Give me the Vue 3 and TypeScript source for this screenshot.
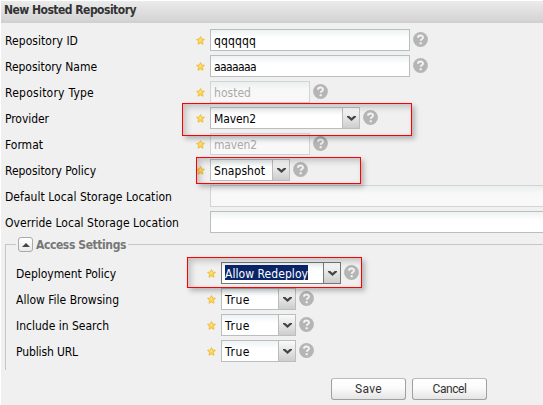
<script setup lang="ts">
interface Field {
  label: string
  labelWidth: number
  value: string
  kind: 'text' | 'combo'
  width: number
  valueWidth?: number
  required?: boolean
  disabled?: boolean
  focused?: boolean
}

const fields: Field[] = [
  { label: 'Repository ID', labelWidth: 73, value: 'qqqqqq', valueWidth: 42, kind: 'text', width: 200, required: true },
  { label: 'Repository Name', labelWidth: 92, value: 'aaaaaaa', valueWidth: 42, kind: 'text', width: 200, required: true },
  { label: 'Repository Type', labelWidth: 89, value: 'hosted', valueWidth: 37, kind: 'text', width: 100, required: true, disabled: true },
  { label: 'Provider', labelWidth: 44, value: 'Maven2', valueWidth: 42, kind: 'combo', width: 150, required: true },
  { label: 'Format', labelWidth: 38, value: 'maven2', valueWidth: 43, kind: 'text', width: 100, required: true, disabled: true },
  { label: 'Repository Policy', labelWidth: 91, value: 'Snapshot', valueWidth: 51, kind: 'combo', width: 80, required: true },
  { label: 'Default Local Storage Location', labelWidth: 167, value: '', kind: 'text', width: 340, disabled: true },
  { label: 'Override Local Storage Location', labelWidth: 174, value: '', kind: 'text', width: 340 },
]

const accessFields: Field[] = [
  { label: 'Deployment Policy', labelWidth: 100, value: 'Allow Redeploy', valueWidth: 83, kind: 'combo', width: 120, required: true, focused: true },
  { label: 'Allow File Browsing', labelWidth: 103, value: 'True', valueWidth: 25, kind: 'combo', width: 75, required: true },
  { label: 'Include in Search', labelWidth: 93, value: 'True', valueWidth: 25, kind: 'combo', width: 75, required: true },
  { label: 'Publish URL', labelWidth: 62, value: 'True', valueWidth: 25, kind: 'combo', width: 75, required: true },
]

const groups = [
  { name: 'main', items: fields },
  { name: 'access', items: accessFields },
]

const vFit = {
  mounted(el: HTMLElement, binding: { value: number | undefined }) {
    const count = el.textContent?.length ?? 0
    if (!binding.value || !count) return
    const natural = el.getBoundingClientRect().width
    el.style.letterSpacing = `${(binding.value - natural) / count}px`
  },
}
</script>

<template>
  <main class="panel">
    <header class="title"><span v-fit="132">New Hosted Repository</span></header>
    <section v-for="group in groups" :key="group.name" :class="['group', group.name]">
      <div v-if="group.name === 'access'" class="legend">
        <button class="toggle" aria-label="Collapse">
          <svg width="8" height="4" viewBox="0 0 8 4"><path d="M0 4 4 0 8 4Z" fill="#444" /></svg>
        </button>
        <span v-fit="90">Access Settings</span>
      </div>
      <div v-for="field in group.items" :key="field.label" class="row" :class="{ disabled: field.disabled }">
        <div class="label"><span v-fit="field.labelWidth">{{ field.label }}</span></div>
        <div class="mark">
          <svg v-if="field.required" width="9" height="9" viewBox="0 0 9 9">
            <path d="M4.5.5 5.7 3 8.5 3.3 6.5 5.3 7 8.3 4.5 7 2 8.3 2.5 5.3.5 3.3 3.3 3Z" fill="#f9d355" stroke="#edb936" stroke-width=".8" stroke-linejoin="round" />
            <path d="M4.5 2.2 4.8 4 4.2 5 3.2 4.2Z" fill="#fff0a5" />
          </svg>
        </div>
        <div class="control" :class="[field.kind, { focused: field.focused }]" :style="{ width: field.width + 'px' }">
          <div class="value"><span v-fit="field.valueWidth" :class="{ selected: field.focused }">{{ field.value }}</span></div>
          <div v-if="field.kind === 'combo'" class="trigger">
            <svg width="9" height="5" viewBox="0 0 9 5"><path d="M0 0H2.2L4.5 2 6.8 0H9V1L4.5 5 0 1Z" fill="#444" /></svg>
          </div>
        </div>
        <svg v-if="field.required" class="help" width="15" height="15" viewBox="0 0 15 15">
          <circle cx="7.5" cy="7.5" r="7.4" fill="#b5b5b5" />
          <path d="M5 5.8C5 2.9 10 2.8 10 5.5 10 7.3 7.7 7.1 7.7 8.8" fill="none" stroke="#f4f4f4" stroke-width="1.9" />
          <rect x="6.6" y="10.2" width="2.2" height="2" rx=".4" fill="#f4f4f4" />
        </svg>
      </div>
    </section>
    <footer class="actions">
      <button><span v-fit="27">Save</span></button>
      <button><span v-fit="34">Cancel</span></button>
    </footer>
    <i class="callout provider"></i>
    <i class="callout policy"></i>
    <i class="callout deployment"></i>
  </main>
</template>

<style>
body {
  margin: 0;
  overflow: hidden;
}
</style>

<style scoped>
.panel {
  position: relative;
  box-sizing: border-box;
  width: 543px;
  height: 405px;
  padding-top: 1px;
  overflow: hidden;
  border-left: 1px solid #fff;
  background: linear-gradient(#fff 0 1px, #f0f0f0 1px);
  font: 12px/16px "DejaVu Sans Condensed", "DejaVu Sans", sans-serif;
  font-stretch: condensed;
  color: #000;
}
.title {
  box-sizing: border-box;
  height: 22px;
  margin-left: -1px;
  padding: 1px 0 0 4px;
  border-bottom: 2px solid #d0d0d0;
  background: linear-gradient(#ebebeb, #d4d4d4);
  font-weight: bold;
  color: #333;
}
.title span,
.label span,
.value span,
.legend span,
.actions span {
  display: inline-block;
  white-space: nowrap;
}
.main {
  padding: 6px 0 0 4px;
}
.row {
  display: flex;
  height: 22px;
  margin-bottom: 4px;
}
.label {
  flex: none;
  width: 191px;
  padding-top: 4px;
}
.mark {
  display: flex;
  flex: none;
  width: 14px;
  padding-top: 7px;
}
.control {
  box-sizing: border-box;
  display: flex;
  flex: none;
  height: 22px;
  border: 1px solid #b9bebf;
  background: linear-gradient(#edf2f3, #fff 8px);
}
.value {
  flex: 1;
  padding: 3px 0 0 3px;
}
.disabled .control {
  border-color: #d0d4d4;
  background: linear-gradient(#ebefef, #f8f8f8 8px);
}
.disabled .value {
  color: #aaa;
}
.trigger {
  display: flex;
  flex: none;
  align-items: center;
  justify-content: center;
  width: 16px;
  border-left: 1px solid #bbb;
  background: linear-gradient(#fafafa, #e2e2e2 55%, #cdcdcd);
}
.focused {
  border-color: #737777;
}
.focused .trigger {
  border-color: #777;
}
.selected {
  box-sizing: border-box;
  height: 15px;
  margin-top: -1px;
  padding-top: 2px;
  line-height: 14px;
  background: #0a246a;
  color: #fff;
}
.help {
  flex: none;
  margin: 3px 0 0 3px;
}
.access {
  box-sizing: border-box;
  height: 133px;
  margin-left: 4px;
  padding-left: 11px;
  background:
    linear-gradient(#c6c6c6, #c6c6c6) 0 7px / 100% 1px no-repeat,
    linear-gradient(#c6c6c6, #c6c6c6) 0 7px / 1px 126px no-repeat;
}
.legend {
  display: flex;
  width: fit-content;
  gap: 3px;
  height: 16px;
  margin-bottom: 9px;
  padding: 0 2px;
  background: #f0f0f0;
  font-weight: bold;
  color: #777;
}
.toggle {
  box-sizing: border-box;
  display: flex;
  align-items: center;
  justify-content: center;
  width: 15px;
  height: 15px;
  padding: 0;
  border: 1px solid #aaa;
  border-radius: 3px;
  background: linear-gradient(#fff, #e9e9e9);
}
.actions {
  display: flex;
  gap: 6px;
  padding: 8px 0 0 330px;
}
.actions button {
  box-sizing: border-box;
  width: 75px;
  height: 22px;
  padding: 0;
  border: 1px solid #a0a0a0;
  border-top-color: #bbb;
  border-radius: 3px;
  background: linear-gradient(#fff, #fbfbfb 45%, #e4e4e4);
  font: 12px Roboto, "Liberation Sans", sans-serif;
  color: #333;
}
.callout {
  position: absolute;
  box-sizing: border-box;
  border: 1px solid #f00;
  box-shadow: 3px 3px 5px rgba(0, 0, 0, .25), inset 3px 3px 6px rgba(0, 0, 0, .2);
}
.provider {
  left: 181px;
  top: 103px;
  width: 230px;
  height: 33px;
}
.policy {
  left: 195px;
  top: 157px;
  width: 165px;
  height: 27px;
}
.deployment {
  left: 186px;
  top: 257px;
  width: 175px;
  height: 31px;
}
</style>
